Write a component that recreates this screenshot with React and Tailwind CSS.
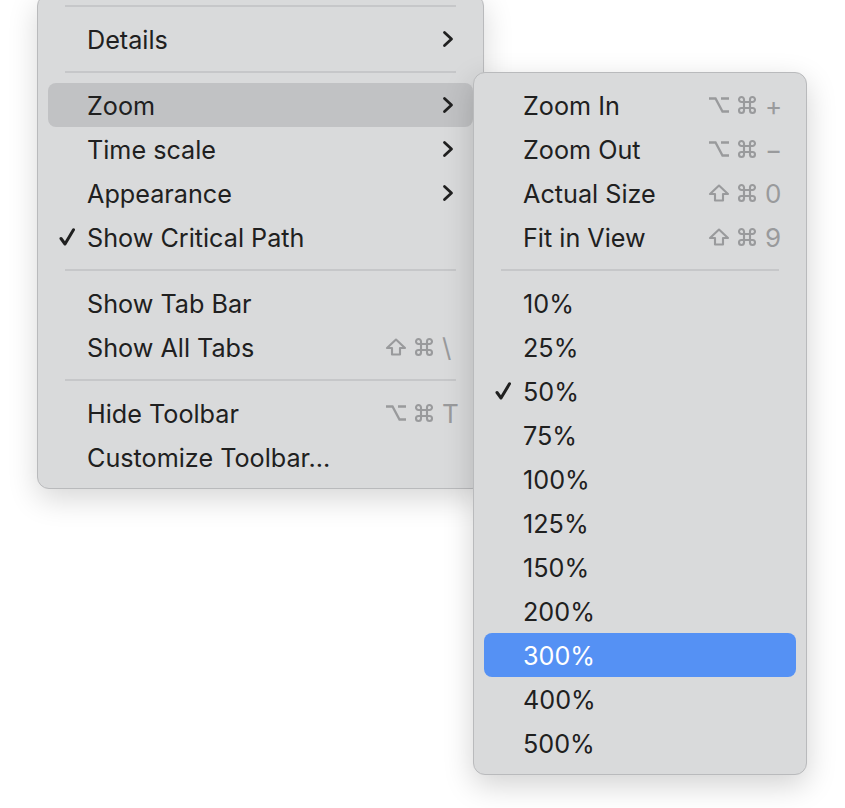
import React from "react";

const FONT = { fontFamily: "Inter, 'Noto Sans', sans-serif" };

function Cmd() {
  return (
    <svg width="20" height="20" viewBox="0 0 20 20" fill="none" stroke="currentColor" strokeWidth="2.1" strokeLinejoin="round">
      <path d="M7 7 V4.5 A2.5 2.5 0 1 0 4.5 7 H15.5 A2.5 2.5 0 1 0 13 4.5 V15.5 A2.5 2.5 0 1 0 15.5 13 H4.5 A2.5 2.5 0 1 0 7 15.5 Z" />
    </svg>
  );
}
function Opt() {
  return (
    <svg width="22" height="18" viewBox="0 0 22 18" fill="none" stroke="currentColor" strokeWidth="2.3" strokeLinecap="butt">
      <path d="M1 2.5 H7.5 L14.5 15.5 H21 M13 2.5 H21" />
    </svg>
  );
}
function Shift() {
  return (
    <svg width="22" height="18" viewBox="0 0 22 18" fill="none" stroke="currentColor" strokeWidth="2.1" strokeLinejoin="round">
      <path d="M11 1.5 L2 10 H7 V16.5 H15 V10 H20 Z" />
    </svg>
  );
}
function Check() {
  return (
    <svg width="16" height="18" viewBox="0 0 16 18" fill="none" stroke="currentColor" strokeWidth="3" strokeLinecap="round" strokeLinejoin="round">
      <path d="M2 10.5 L6 16 L14.5 1.8" />
    </svg>
  );
}
function Chevron() {
  return (
    <svg width="12" height="18" viewBox="0 0 12 18" fill="none" stroke="currentColor" strokeWidth="2.8" strokeLinecap="round" strokeLinejoin="round">
      <path d="M2.5 2.5 L9.5 9 L2.5 15.5" />
    </svg>
  );
}

function Shortcut({ mod, k }) {
  return (
    <div className="flex items-center text-[#999a9c]">
      <span className="flex w-[22px] justify-center">{mod === "opt" ? <Opt /> : <Shift />}</span>
      <span className="ml-[7px] flex w-[20px] justify-center">
        <Cmd />
      </span>
      <span className="ml-[8px] w-[23px] pt-[2px] text-[26px] leading-none">{k}</span>
    </div>
  );
}

function Row({ label, checked, chevron, shortcut, hl, blue }) {
  const bg = blue ? "bg-[#5591f4] text-white" : hl ? "bg-[#c1c2c4] text-[#202020]" : "text-[#202020]";
  return (
    <div className={`relative mx-[10px] flex h-[44px] items-center rounded-[8px] pl-[39px] ${bg}`}>
      {checked && (
        <span className="absolute left-[11px] top-[13px]">
          <Check />
        </span>
      )}
      <span className="flex-1 pt-[3px] text-[25.2px] leading-none">{label}</span>
      {chevron && (
        <span className="mr-[19px] flex">
          <Chevron />
        </span>
      )}
      {shortcut && <div className="mr-[8px]">{shortcut}</div>}
    </div>
  );
}

function Sep() {
  return (
    <div className="flex h-[22px] items-center px-[27px]">
      <div className="h-[2px] w-full bg-[#c6c7c9]" />
    </div>
  );
}

export default function App() {
  const zooms = ["10%", "25%", "50%", "75%", "100%", "125%", "150%", "200%", "300%", "400%", "500%"];
  return (
    <div className="h-[808px] w-[845px] overflow-hidden bg-white" style={FONT}>
      <div className="flex items-start">
        <div className="z-0 ml-[37px] mt-[-6px] w-[447px] rounded-[12px] border border-[#b9babc] bg-[#d9dadb] pb-[9px] shadow-[0_10px_30px_rgba(0,0,0,0.16)]">
          <Sep />
          <Row label="Details" chevron />
          <Sep />
          <Row label="Zoom" chevron hl />
          <Row label="Time scale" chevron />
          <Row label="Appearance" chevron />
          <Row label="Show Critical Path" checked />
          <Sep />
          <Row label="Show Tab Bar" />
          <Row label="Show All Tabs" shortcut={<Shortcut mod="shift" k="\" />} />
          <Sep />
          <Row label="Hide Toolbar" shortcut={<Shortcut mod="opt" k="T" />} />
          <Row label="Customize Toolbar…" />
        </div>
        <div className="relative z-10 ml-[-11px] mt-[72px] w-[334px] rounded-[12px] border border-[#b9babc] bg-[#d9dadb] pb-[9px] pt-[10px] shadow-[0_10px_30px_rgba(0,0,0,0.18)]">
          <Row label="Zoom In" shortcut={<Shortcut mod="opt" k="+" />} />
          <Row label="Zoom Out" shortcut={<Shortcut mod="opt" k="−" />} />
          <Row label="Actual Size" shortcut={<Shortcut mod="shift" k="0" />} />
          <Row label="Fit in View" shortcut={<Shortcut mod="shift" k="9" />} />
          <Sep />
          {zooms.map((z) => (
            <Row key={z} label={z} checked={z === "50%"} blue={z === "300%"} />
          ))}
        </div>
      </div>
    </div>
  );
}
